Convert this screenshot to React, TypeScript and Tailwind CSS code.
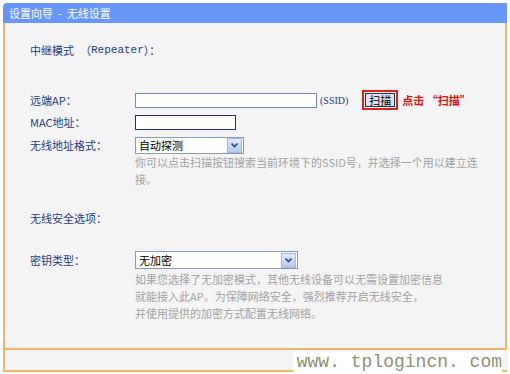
export default function App() {
  const label = "w-[105px] shrink-0 text-[#1d3b86]";
  const help = "h-[17px] leading-[17px] text-[#a3a3a3] whitespace-nowrap";
  const serif = { fontFamily: '"Liberation Serif", "Noto Sans CJK SC", serif' };

  return (
    <div
      className="relative w-[510px] h-[374px] bg-white pt-[3px] pl-[3px] overflow-hidden text-[11px]"
      style={{ fontFamily: '"Noto Sans CJK SC", "Noto Sans", sans-serif' }}
    >
      <div className="w-[504px]">
        {/* Title bar */}
        <div className="h-[20px] bg-[#6797fb] rounded-tl-[4px] pl-[6px] leading-[20px] text-white text-[11px] whitespace-pre">
          设置向导  -  无线设置
        </div>

        {/* Body */}
        <div className="h-[327px] bg-[#f4f4f4] border-l-2 border-r-2 border-b-2 border-[#f5b36a] pl-[25px] pt-[19px]">
          <div className="flex h-[17px] items-center">
            <span className="w-[50px] text-[#1d3b86]">中继模式</span>
            <span className="text-[#1d3b86] flex items-center">
              （
              <span className="text-[11px]" style={{ fontFamily: '"Liberation Mono", monospace' }}>
                Repeater
              </span>
              ）：
            </span>
          </div>

          <div className="flex h-[20px] items-center mt-[31px]">
            <span className={label}>远端AP：</span>
            <div className="w-[182px] h-[15px] bg-white border border-[#6f87c5]" />
            <span className="ml-[3px] text-[#1d3b86] text-[10px]" style={serif}>
              (SSID)
            </span>
            <div className="ml-[14px] w-[36px] h-[20px] border-2 border-[#e02020] p-[1px]">
              <div className="h-full bg-[#dde2f6] border border-[#333] flex items-center justify-center text-black text-[11px] leading-none">
                扫描
              </div>
            </div>
            <span className="ml-[4px] text-[#e01010] font-bold">点击 “扫描”</span>
          </div>

          <div className="flex h-[18px] items-center mt-[3px]">
            <span className={label}>MAC地址：</span>
            <div className="w-[101px] h-[15px] bg-white border border-[#1d2f7a]" />
          </div>

          <div className="flex h-[18px] items-center mt-[5px]">
            <span className={label}>无线地址格式：</span>
            <div className="w-[109px] h-[17px] bg-white border border-[#7f9db9] flex items-center">
              <span className="flex-1 pl-[3px] text-black">自动探测</span>
              <Arrow />
            </div>
          </div>
          <div className="pl-[105px]">
            <div className={help}>你可以点击扫描按钮搜索当前环境下的SSID号，并选择一个用以建立连</div>
            <div className={help}>接。</div>
          </div>

          <div className="flex h-[17px] items-center mt-[22px]">
            <span className={label}>无线安全选项：</span>
          </div>

          <div className="flex h-[18px] items-center mt-[24px]">
            <span className={label}>密钥类型：</span>
            <div className="w-[163px] h-[18px] bg-white border border-[#7f9db9] flex items-center">
              <span className="flex-1 pl-[3px] text-black">无加密</span>
              <Arrow />
            </div>
          </div>
          <div className="pl-[105px] mt-[2px]">
            <div className={help}>如果您选择了无加密模式，其他无线设备可以无需设置加密信息</div>
            <div className={help}>就能接入此AP。为保障网络安全，强烈推荐开启无线安全，</div>
            <div className={help}>并使用提供的加密方式配置无线网络。</div>
          </div>
        </div>

        {/* Footer strip */}
        <div className="h-[22px] bg-[#f4f4f4] border-l-2 border-b-2 border-[#f5b36a]" />
      </div>

      {/* watermark */}
      <div
        className="absolute right-[8px] bottom-0 h-[24px] pl-[4px] bg-white text-[18px] leading-[24px] text-[#8b9070] whitespace-pre"
        style={{ fontFamily: '"Liberation Mono", monospace' }}
      >
        www. tplogincn. com
      </div>
    </div>
  );
}

function Arrow() {
  return (
    <div className="w-[15px] h-[15px] mr-[1px] bg-gradient-to-b from-[#dfe8fb] to-[#b7c9f0] border border-[#a6b9e4] flex items-center justify-center">
      <svg width="7" height="5" viewBox="0 0 7 5">
        <path d="M0.5 0.5 L3.5 3.5 L6.5 0.5" fill="none" stroke="#2a4b9b" strokeWidth="1.6" />
      </svg>
    </div>
  );
}
